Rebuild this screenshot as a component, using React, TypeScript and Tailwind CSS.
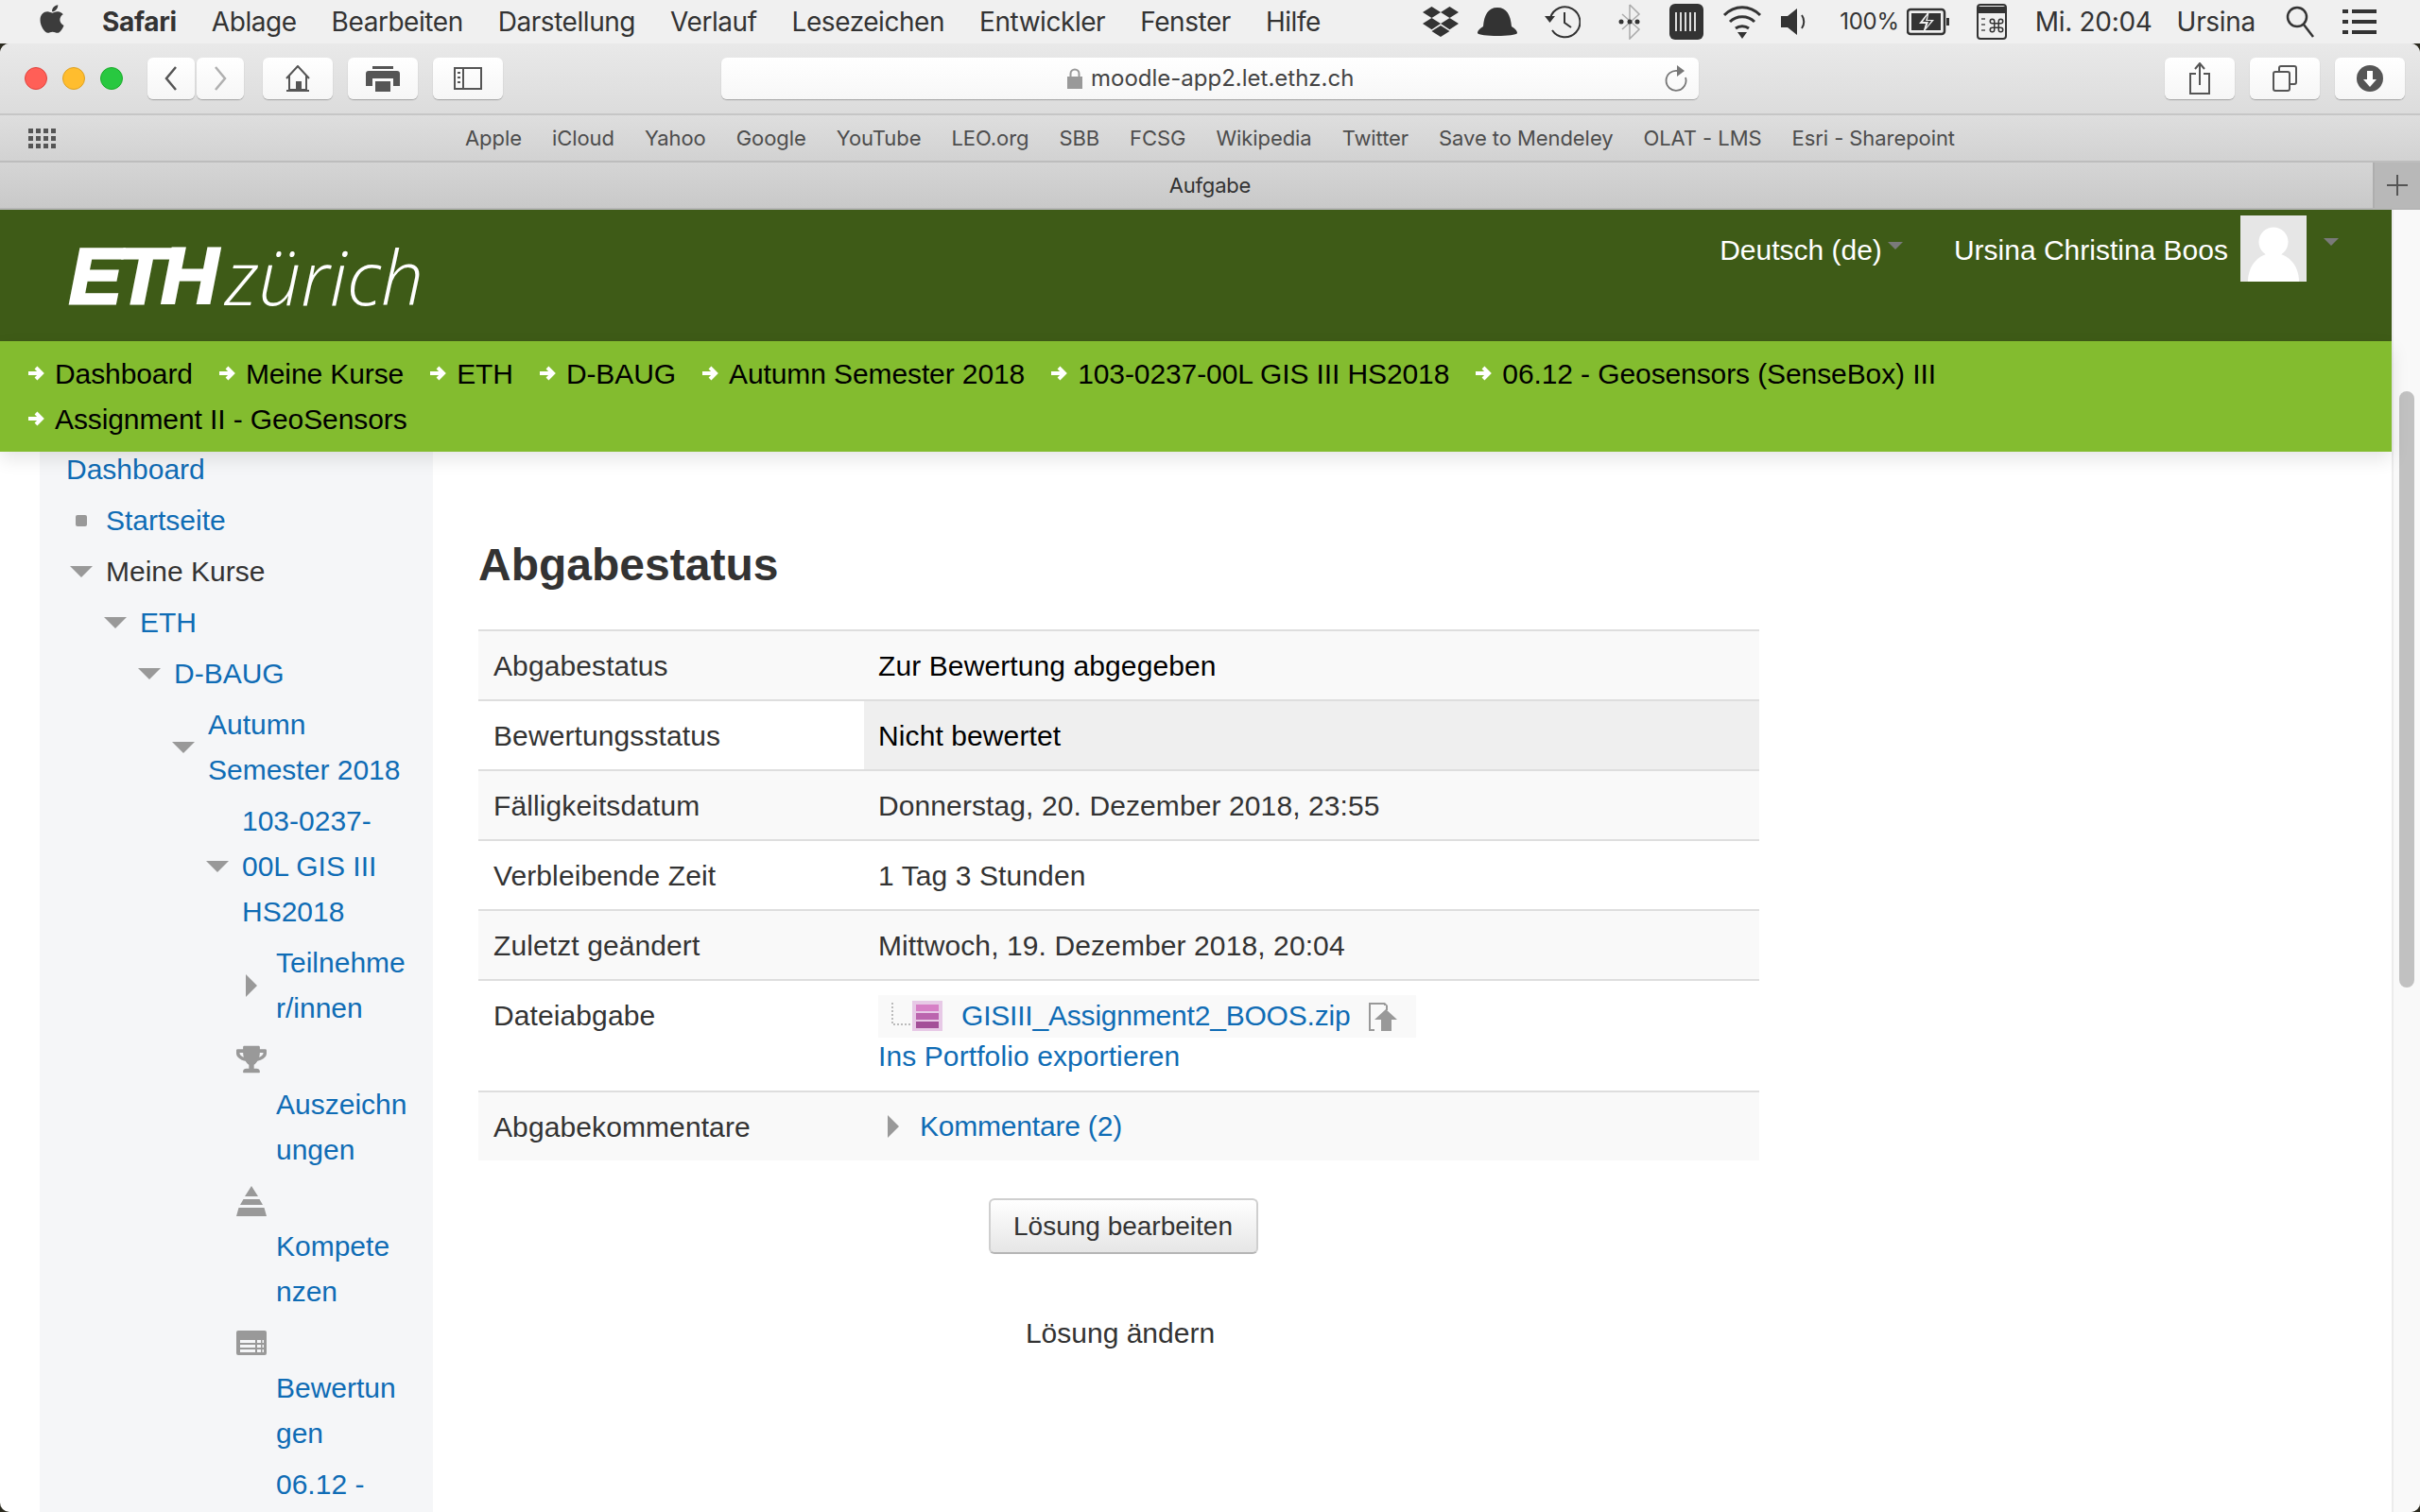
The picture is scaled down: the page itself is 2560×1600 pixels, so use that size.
import type { ReactNode } from 'react';
import { FaApple, FaDropbox, FaTrophy } from 'react-icons/fa';

const menuItems = ['Ablage', 'Bearbeiten', 'Darstellung', 'Verlauf', 'Lesezeichen', 'Entwickler', 'Fenster', 'Hilfe'];
const bookmarks = ['Apple', 'iCloud', 'Yahoo', 'Google', 'YouTube', 'LEO.org', 'SBB', 'FCSG', 'Wikipedia', 'Twitter', 'Save to Mendeley', 'OLAT - LMS', 'Esri - Sharepoint'];
const crumbs = ['Dashboard', 'Meine Kurse', 'ETH', 'D-BAUG', 'Autumn Semester 2018', '103-0237-00L GIS III HS2018', '06.12 - Geosensors (SenseBox) III', 'Assignment II - GeoSensors'];

const Down = () => (
  <svg width="24" height="12" viewBox="0 0 24 12" className="shrink-0"><path d="M0 0h24L12 12z" fill="#999" /></svg>
);
const Right = () => (
  <svg width="12" height="24" viewBox="0 0 12 24" className="shrink-0"><path d="M0 0l12 12L0 24z" fill="#999" /></svg>
);
const Caret = () => (
  <svg width="16" height="8" viewBox="0 0 16 8" className="shrink-0"><path d="M0 0h16L8 8z" fill="#7a7a7a" /></svg>
);

const CrumbArrow = () => (
  <svg width="18" height="16" viewBox="0 0 18 16" className="shrink-0">
    <path d="M1 8h13M9 2l6 6-6 6" fill="none" stroke="#fff" strokeWidth="4" />
  </svg>
);

const PyramidIcon = () => (
  <svg width="32" height="32" viewBox="0 0 32 32">
    <path d="M16 0l7 11H9zM7.500 14h17l3.500 6H4zM2.500 23h27l2.500 9H0z" fill="#999" />
  </svg>
);

const GradesIcon = () => (
  <svg width="32" height="26" viewBox="0 0 32 26">
    <rect width="32" height="26" rx="2" fill="#999" />
    <path d="M4 10h16v3H4zM4 15h16v3H4zM4 20h16v3H4zM22 10h4v3h-4zM22 15h4v3h-4zM22 20h4v3h-4zM27.500 10h1.500v3h-1.500zM27.500 15h1.500v3h-1.500zM27.500 20h1.500v3h-1.500z" fill="#f5f6f8" />
  </svg>
);

// sidebar tree, written line by line because the narrow column breaks words
type NavRow = { lines: string[]; pad: string; marker?: ReactNode; over?: ReactNode; dark?: boolean };
const navRows: NavRow[] = [
  { lines: ['Dashboard'], pad: 'pl-[28px]' },
  { lines: ['Startseite'], pad: 'pl-[38px]', marker: <span className="mr-[20px] size-[12px] rounded-[2px] bg-[#999]" /> },
  { lines: ['Meine Kurse'], pad: 'pl-[32px]', marker: <span className="mr-[14px]"><Down /></span>, dark: true },
  { lines: ['ETH'], pad: 'pl-[68px]', marker: <span className="mr-[14px]"><Down /></span> },
  { lines: ['D-BAUG'], pad: 'pl-[104px]', marker: <span className="mr-[14px]"><Down /></span> },
  { lines: ['Autumn', 'Semester 2018'], pad: 'pl-[140px]', marker: <span className="mr-[14px]"><Down /></span> },
  { lines: ['103-0237-', '00L GIS III', 'HS2018'], pad: 'pl-[176px]', marker: <span className="mr-[14px]"><Down /></span> },
  { lines: ['Teilnehme', 'r/innen'], pad: 'pl-[218px]', marker: <span className="mr-[20px]"><Right /></span> },
  { lines: ['Auszeichn', 'ungen'], pad: 'pl-[250px]', over: <FaTrophy size={32} color="#999" /> },
  { lines: ['Kompete', 'nzen'], pad: 'pl-[250px]', over: <PyramidIcon /> },
  { lines: ['Bewertun', 'gen'], pad: 'pl-[250px]', over: <GradesIcon /> },
  { lines: ['06.12 -'], pad: 'pl-[250px]' },
];

const Sidebar = () => (
  <aside className="-mt-[8px] w-[416px] shrink-0 bg-[#f5f6f8] text-[#0f6cb5]">
    {navRows.map(row => (
      <div key={row.lines[0]} className={`py-[3px] ${row.pad}`}>
        {row.over && <div className="-ml-[42px] flex h-[48px] items-center">{row.over}</div>}
        <div className="flex items-center">
          {row.marker}
          <div className={row.dark ? 'text-[#333]' : ''}>
            {row.lines.map(line => (
              <div key={line} className="h-[48px] whitespace-nowrap leading-[48px]">{line}</div>
            ))}
          </div>
        </div>
      </div>
    ))}
  </aside>
);

const ToolButton = ({ width, children }: { width: string; children: ReactNode }) => (
  <div className={`flex h-[44px] items-center justify-center rounded-[6px] bg-gradient-to-b from-white to-[#f6f6f6] shadow-[0_1px_1px_rgba(0,0,0,0.28)] ${width}`}>
    {children}
  </div>
);

const StatusRow = ({ label, children, h = 'h-[74px]', bg = 'bg-[#f9f9f9]', cell = '', labelCls = 'items-center' }: { label: string; children: ReactNode; h?: string; bg?: string; cell?: string; labelCls?: string }) => (
  <div className={`flex border-t-2 border-[#dedede] ${h} ${bg}`}>
    <div className={`flex w-[408px] shrink-0 pl-[16px] ${labelCls}`}>{label}</div>
    <div className={`flex flex-1 items-center pl-[15px] ${cell}`}>{children}</div>
  </div>
);

export default function App() {
  return (
    <div className="flex h-[1600px] w-[2560px] flex-col overflow-hidden bg-[#2b2a1f] font-['Liberation_Sans',sans-serif] text-[30px] text-[#333]">
      {/* mac menu bar */}
      <div className="flex h-[46px] shrink-0 items-center bg-[#f0f0f0] font-['Inter',sans-serif] text-[28px] tracking-[-0.3px] text-[#333]">
        <FaApple size={34} color="#3c3c3c" className="ml-[38px] mr-[36px] -mt-[6px]" />
        <span className="mr-[37px] font-bold">Safari</span>
        <div className="flex gap-[37px] tracking-[-0.45px]">
          {menuItems.map(item => <span key={item}>{item}</span>)}
        </div>
        <div className="ml-auto flex items-center">
          <FaDropbox size={38} color="#333" className="mr-[19px]" />
          <svg width="44" height="32" viewBox="0 0 44 32" className="mr-[28px]"><path d="M1 28c0-3 3-5 6-7C8 9 12 1 22 1s14 8 15 20c3 2 6 4 6 7-1 4-41 4-42 0z" fill="#333" /></svg>
          <svg width="38" height="36" viewBox="0 0 38 36" className="mr-[40px]" fill="none" stroke="#333" strokeWidth="2"><path d="M6 14A16 16 0 1 1 8 27" /><path d="M21 8v11l7 5" /><path d="M0 12h11l-5.500 7z" fill="#333" stroke="none" /></svg>
          <svg width="24" height="38" viewBox="0 0 24 38" className="mr-[30px]"><path d="M12 1v36l10-10-18-16M12 1l10 10-18 16" fill="none" stroke="#aaa" strokeWidth="1.500" /><circle cx="3" cy="19" r="2.500" fill="#333" /><circle cx="12" cy="19" r="2.500" fill="#333" /><circle cx="20" cy="19" r="2.500" fill="#333" /></svg>
          <svg width="36" height="38" viewBox="0 0 36 38" className="mr-[20px]"><rect width="36" height="38" rx="6" fill="#333" /><path d="M7 9v20M12 9v20M17 9v20M22 9v20M27 9v20" stroke="#ddd" strokeWidth="2" /></svg>
          <svg width="42" height="36" viewBox="0 0 42 36" className="mr-[20px]" fill="none" stroke="#333" strokeWidth="3"><path d="M2 11c11-11 27-11 38 0M8 18c7-7 19-7 26 0M14 25c4-3 10-3 14 0" /><path d="M16 29h10l-5 7z" fill="#333" stroke="none" /></svg>
          <svg width="28" height="30" viewBox="0 0 28 30" className="mr-[34px]"><path d="M0 9h7l10-8v28L7 21H0z" fill="#333" /><path d="M22 8c3 4 3 10 0 14" fill="none" stroke="#333" strokeWidth="2" /></svg>
          <span className="mr-[8px] text-[24px]">100%</span>
          <svg width="46" height="30" viewBox="0 0 46 30" className="mr-[28px]"><rect x="1" y="2" width="39" height="26" rx="3" fill="none" stroke="#333" strokeWidth="2.500" /><rect x="5" y="6" width="31" height="18" fill="#333" /><path d="M42 11h3v8h-3z" fill="#333" /><path d="M24 3L13 17h7l-3 10 12-14h-7z" fill="#f0f0f0" /><path d="M22 8l-5 7h6l-2 6 5-7h-6z" fill="#333" /></svg>
          <svg width="32" height="38" viewBox="0 0 32 38" className="mr-[30px]"><rect x="1" y="1" width="30" height="36" rx="3" fill="none" stroke="#333" strokeWidth="2" /><path d="M1 3h30v7H1z" fill="#333" /><g transform="translate(12 14) scale(0.75)" fill="none" stroke="#333" strokeWidth="2"><path d="M15 6v12a3 3 0 1 0 3-3H6a3 3 0 1 0 3 3V6a3 3 0 1 0-3 3h12a3 3 0 1 0-3-3" /></g><path d="M5 16h4M5 22h4M5 28h4" stroke="#777" strokeWidth="2" /></svg>
          <span className="mr-[26px] whitespace-nowrap">Mi. 20:04</span>
          <span className="mr-[32px]">Ursina</span>
          <svg width="30" height="34" viewBox="0 0 30 34" className="mr-[30px]" fill="none" stroke="#333" strokeWidth="2.500"><circle cx="12" cy="12" r="10" /><path d="M19 20l10 13" /></svg>
          <svg width="36" height="28" viewBox="0 0 36 28" className="mr-[46px]"><path d="M0 1h6v4H0zM10 1h26v4H10zM0 12h6v4H0zM10 12h26v4H10zM0 23h6v4H0zM10 23h26v4H10z" fill="#333" /></svg>
        </div>
      </div>

      <div className="flex min-h-0 flex-1 flex-col overflow-hidden rounded-[10px] bg-white">
        {/* safari toolbar */}
        <div className="flex h-[76px] shrink-0 items-center border-b-2 border-[#c6c6c6] bg-gradient-to-b from-[#e9e9e9] to-[#dcdcdc] pl-[26px] pr-[16px]">
          <span className="size-[24px] rounded-full border border-[#e0443e] bg-[#ff5f57]" />
          <span className="ml-[16px] size-[24px] rounded-full border border-[#dea123] bg-[#ffbd2e]" />
          <span className="ml-[16px] size-[24px] rounded-full border border-[#1aab29] bg-[#28c840]" />
          <div className="ml-[26px] flex gap-[2px]">
            <ToolButton width="w-[50px]"><svg width="14" height="26" viewBox="0 0 14 26" fill="none" stroke="#555" strokeWidth="2.500"><path d="M12 1L2 13l10 12" /></svg></ToolButton>
            <ToolButton width="w-[50px]"><svg width="14" height="26" viewBox="0 0 14 26" fill="none" stroke="#b0b0b0" strokeWidth="2.500"><path d="M2 1l10 12L2 25" /></svg></ToolButton>
          </div>
          <div className="ml-[20px] flex gap-[16px]">
            <ToolButton width="w-[74px]"><svg width="26" height="28" viewBox="0 0 26 28" fill="none" stroke="#555" strokeWidth="2"><path d="M1 14L13 1l12 13M4 11v15h18V11M1 27h24" /><path d="M11 17h6v9h-6z" fill="#555" stroke="none" /></svg></ToolButton>
            <ToolButton width="w-[74px]"><svg width="36" height="28" viewBox="0 0 36 28"><path d="M7 4V1h22v3H7zM3 6h30a3 3 0 0 1 3 3v13h-7V14H7v8H0V9a3 3 0 0 1 3-3zM10 17h16v11H10z" fill="#555" /></svg></ToolButton>
            <ToolButton width="w-[74px]"><svg width="30" height="24" viewBox="0 0 30 24" fill="none" stroke="#555" strokeWidth="2"><rect x="1" y="1" width="28" height="22" /><path d="M10 1v22" /><path d="M4 6h3M4 11h3M4 16h3" /></svg></ToolButton>
          </div>
          <div className="ml-[231px] flex h-[44px] w-[1034px] items-center rounded-[6px] bg-gradient-to-b from-white to-[#f7f7f7] pl-[366px] pr-[12px] font-['Inter',sans-serif] text-[24px] text-[#444] shadow-[0_1px_1px_rgba(0,0,0,0.28)]">
            <svg width="16" height="22" viewBox="0 0 16 22" className="mr-[9px] shrink-0"><path d="M0 9h16v13H0z" fill="#999" /><path d="M3.500 9V6a4.500 4.500 0 0 1 9 0v3" fill="none" stroke="#999" strokeWidth="2" /></svg>
            <span>moodle-app2.let.ethz.ch</span>
            <svg width="24" height="30" viewBox="0 0 24 30" className="ml-auto" fill="none" stroke="#777" strokeWidth="1.800"><path d="M14 7A10.500 10.500 0 1 0 22 14" /><path d="M13 1l8 6-8 6z" fill="#777" stroke="none" /></svg>
          </div>
          <div className="ml-auto flex gap-[16px]">
            <ToolButton width="w-[74px]"><svg width="22" height="34" viewBox="0 0 22 34" fill="none" stroke="#555" strokeWidth="2"><path d="M7 12H1v21h20V12h-6M11 24V2M6 7l5-6 5 6" /></svg></ToolButton>
            <ToolButton width="w-[74px]"><svg width="26" height="28" viewBox="0 0 26 28" fill="none" stroke="#555" strokeWidth="2"><rect x="1" y="7" width="17" height="20" rx="2" /><path d="M7 7V3a2 2 0 0 1 2-2h14a2 2 0 0 1 2 2v15a2 2 0 0 1-2 2h-5" /></svg></ToolButton>
            <ToolButton width="w-[74px]"><svg width="28" height="28" viewBox="0 0 28 28"><circle cx="14" cy="14" r="14" fill="#555" /><path d="M11 6h6v9h4l-7 8-7-8h4z" fill="#fff" /></svg></ToolButton>
          </div>
        </div>

        {/* favourites bar */}
        <div className="relative flex h-[50px] shrink-0 items-center justify-center gap-[32px] border-b-2 border-[#bdbdbd] bg-gradient-to-b from-[#dedede] to-[#d2d2d2] font-['Inter',sans-serif] text-[22px] tracking-[-0.07px] text-[#4d4d4d]">
          <svg width="30" height="22" viewBox="0 0 30 22" className="absolute left-[30px] top-[14px]" fill="#555">
            <path d="M0 0h5v5H0zM8 0h5v5H8zM16 0h5v5h-5zM24 0h5v5h-5zM0 8h5v5H0zM8 8h5v5H8zM16 8h5v5h-5zM24 8h5v5h-5zM0 16h5v5H0zM8 16h5v5H8zM16 16h5v5h-5zM24 16h5v5h-5z" />
          </svg>
          {bookmarks.map(b => <span key={b} className="whitespace-nowrap">{b}</span>)}
        </div>

        {/* tab strip */}
        <div className="flex h-[50px] shrink-0 items-center border-b-2 border-[#b5b5b5] bg-gradient-to-b from-[#d5d5d5] to-[#c9c9c9] font-['Inter',sans-serif] text-[22px] tracking-[-0.2px] text-[#333]">
          <span className="flex-1 pl-[50px] text-center">Aufgabe</span>
          <div className="flex h-full w-[50px] items-center justify-center border-l-2 border-[#aeaeae] bg-[#b8b8b8]">
            <svg width="22" height="22" viewBox="0 0 22 22"><path d="M11 0v22M0 11h22" stroke="#555" strokeWidth="2" /></svg>
          </div>
        </div>

        <div className="flex min-h-0 flex-1">
          <div className="flex min-w-0 flex-1 flex-col">
            {/* moodle header */}
            <header className="flex h-[139px] shrink-0 bg-[#3e5b17] text-white">
              <div className="ml-[73px] mt-[28px] flex h-[84px] items-center whitespace-nowrap italic">
                <span className="font-['Liberation_Sans',sans-serif] text-[84px] font-bold tracking-[-5px] [-webkit-text-stroke:3px_white]">ETH</span>
                <span className="ml-[12px] font-['Open_Sans',sans-serif] text-[80px] font-light">zürich</span>
              </div>
              <div className="ml-auto mr-[56px] mt-[6px] flex h-[70px] items-center">
                <span className="mt-[3px]">Deutsch (de)</span>
                <span className="ml-[6px] mr-[54px] -mt-[6px]"><Caret /></span>
                <span className="mt-[3px]">Ursina Christina Boos</span>
                <div className="ml-[13px] flex size-[70px] items-end justify-center overflow-hidden bg-[#e6e6e6]">
                  <svg width="54" height="58" viewBox="0 0 54 58" fill="#fff"><circle cx="27" cy="16" r="15.500" /><path d="M0 58c0-17 11-30 27-30s27 13 27 30z" /></svg>
                </div>
                <span className="ml-[18px] -mt-[14px]"><Caret /></span>
              </div>
            </header>

            {/* breadcrumb */}
            <nav className="relative z-10 flex h-[117px] shrink-0 flex-wrap content-start gap-x-[27px] bg-[#83bc2f] pl-[29px] pr-[400px] pt-[10px] tracking-[-0.1px] text-black shadow-[0_8px_18px_rgba(0,0,0,0.1)]">
              {crumbs.map(c => (
                <span key={c} className="flex h-[48px] items-center gap-[11px] whitespace-nowrap"><CrumbArrow />{c}</span>
              ))}
            </nav>

            <div className="flex min-h-0 flex-1 pl-[42px]">
              <Sidebar />
              <main className="flex-1 pl-[48px] pr-[669px]">
                <h2 className="mt-[91px] h-[58px] text-[48px] font-bold leading-[58px] text-[#333]">Abgabestatus</h2>
                <div className="mt-[39px] tracking-[0.1px]">
                  <StatusRow label="Abgabestatus"><span className="text-black">Zur Bewertung abgegeben</span></StatusRow>
                  <StatusRow label="Bewertungsstatus" bg="bg-white" cell="bg-[#efefef]"><span className="text-black">Nicht bewertet</span></StatusRow>
                  <StatusRow label="Fälligkeitsdatum">Donnerstag, 20. Dezember 2018, 23:55</StatusRow>
                  <StatusRow label="Verbleibende Zeit" bg="bg-white">1 Tag 3 Stunden</StatusRow>
                  <StatusRow label="Zuletzt geändert">Mittwoch, 19. Dezember 2018, 20:04</StatusRow>
                  <StatusRow label="Dateiabgabe" h="h-[118px]" bg="bg-white" labelCls="items-start pt-[14px]">
                    <div className="flex flex-col text-[#0f6cb5]">
                      <div className="flex h-[45px] w-[569px] items-center bg-[#f9f9f9]">
                        <svg width="36" height="26" viewBox="0 0 36 26" className="ml-[14px] -mt-[2px] shrink-0" fill="none" stroke="#bbb" strokeWidth="2" strokeDasharray="2 2"><path d="M1 0v23h25" /></svg>
                        <svg width="32" height="32" viewBox="0 0 32 32" className="-ml-[14px] shrink-0">
                          <rect width="32" height="32" fill="#e7c9e6" />
                          <rect x="4" y="4" width="24" height="7" fill="#d77fc6" />
                          <rect x="4" y="13" width="24" height="7" fill="#bb65ae" />
                          <rect x="4" y="22" width="24" height="7" fill="#a34f98" />
                        </svg>
                        <span className="ml-[20px] -mt-[2px] whitespace-nowrap tracking-[-0.2px]">GISIII_Assignment2_BOOS.zip</span>
                        <svg width="32" height="32" viewBox="0 0 32 32" className="ml-[18px] shrink-0">
                          <path d="M2 2h17l3 3v5h-2V5h-2V4H4v26h4v2H2z" fill="#999" />
                          <path d="M20 9l12 11h-6v12h-11V20H8z" fill="#999" />
                        </svg>
                      </div>
                      <span className="mt-[-2px] h-[44px] leading-[44px]">Ins Portfolio exportieren</span>
                    </div>
                  </StatusRow>
                  <StatusRow label="Abgabekommentare">
                    <span className="ml-[10px] mr-[22px]"><Right /></span>
                    <span className="-mt-[1px] tracking-[-0.2px] text-[#0f6cb5]">Kommentare (2)</span>
                  </StatusRow>
                </div>
                <div className="mt-[40px] flex justify-center pl-[9px]">
                  <div className="flex h-[59px] w-[285px] items-center justify-center rounded-[6px] border-2 border-[#cfcfcf] border-b-[#b5b5b5] bg-gradient-to-b from-white to-[#e6e6e6] text-[28px]">Lösung bearbeiten</div>
                </div>
                <p className="mt-[60px] h-[48px] pl-[3px] text-center leading-[48px]">Lösung ändern</p>
              </main>
            </div>
          </div>

          {/* page scrollbar */}
          <div className="w-[30px] shrink-0 border-l-2 border-[#ececec] bg-[#f9f9f9] pl-[6px] pt-[192px]">
            <div className="h-[631px] w-[16px] rounded-full bg-[#c1c1c1]" />
          </div>
        </div>
      </div>
    </div>
  );
}
